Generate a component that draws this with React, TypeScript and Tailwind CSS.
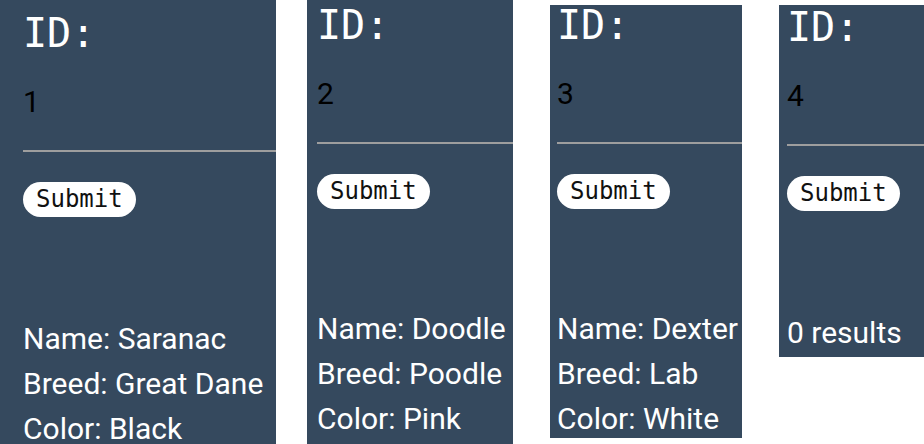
import type { ReactNode } from "react";

const mono = "font-['DejaVu_Sans_Mono',monospace]";
const sans = "font-['Roboto',sans-serif]";

interface PanelProps {
  id: string;
  frame: string;
  pad: string;
  gap: string;
  children: ReactNode;
}

function Panel({ id, frame, pad, gap, children }: PanelProps) {
  return (
    <div className={`shrink-0 overflow-hidden bg-[#35495e] ${frame}`}>
      <div className={pad}>
        <h1 className={`${mono} text-[40px] leading-[40px] text-white`}>ID:</h1>
        <input
          readOnly
          value={id}
          className={`${sans} mt-[25px] block h-[74px] w-full border-0 border-b-2 border-[#9e9e9e] bg-transparent pb-[25px] text-[30px] text-black outline-none`}
        />
        <button
          className={`${mono} mt-[30px] rounded-full bg-white px-[13px] text-[24px] leading-[35px] text-[#111]`}
        >
          Submit
        </button>
        <div className={`${sans} ${gap} text-[30px] leading-[45px] text-white`}>{children}</div>
      </div>
    </div>
  );
}

export default function App() {
  return (
    <div className="flex h-[444px] w-[924px] items-start overflow-hidden bg-white">
      <Panel id="1" frame="h-[444px] w-[276px]" pad="pl-[23px] pt-[13px]" gap="mt-[99px]">
        <p>Name: Saranac</p>
        <p>Breed: Great Dane</p>
        <p>Color: Black</p>
      </Panel>
      <Panel id="2" frame="ml-[31px] h-[444px] w-[206px]" pad="pl-[10px] pt-[5px]" gap="mt-[97px]">
        <p>Name: Doodle</p>
        <p>Breed: Poodle</p>
        <p>Color: Pink</p>
      </Panel>
      <Panel id="3" frame="ml-[37px] mt-[5px] h-[433px] w-[192px]" pad="pl-[7px] pt-0" gap="mt-[97px]">
        <p>Name: Dexter</p>
        <p>Breed: Lab</p>
        <p>Color: White</p>
      </Panel>
      <Panel id="4" frame="ml-[37px] mt-[5px] h-[352px] w-[145px]" pad="pl-[8px] pt-[2px]" gap="mt-[99px]">
        <p>0 results</p>
      </Panel>
    </div>
  );
}
